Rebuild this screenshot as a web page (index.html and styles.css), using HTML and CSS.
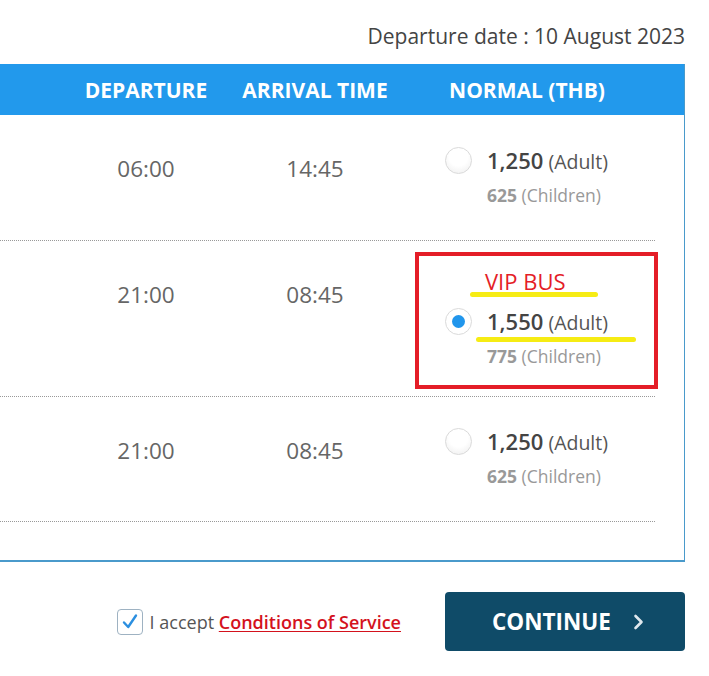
FILE: index.html
```html
<!DOCTYPE html>
<html>
<head>
<meta charset="utf-8">
<link rel="stylesheet" href="styles.css">
</head>
<body>
<div class="page">
  <div class="date">Departure date : 10 August 2023</div>
  <div class="table">
    <div class="head">
      <div></div>
      <div class="hcell">DEPARTURE</div>
      <div class="hcell">ARRIVAL TIME</div>
      <div class="hcell">NORMAL (THB)</div>
      <div></div>
    </div>
    <div class="body">
      <div class="row r1">
        <div></div>
        <div class="time">06:00</div>
        <div class="time">14:45</div>
        <div class="price">
          <span class="radio"></span>
          <div class="amounts">
            <div class="adult"><b>1,250</b> (Adult)</div>
            <div class="child"><b>625</b> (Children)</div>
          </div>
        </div>
      </div>
      <div class="row r2">
        <div></div>
        <div class="time">21:00</div>
        <div class="time">08:45</div>
        <div class="price vip">
          <div class="vipbox">
            <div class="viptitle">VIP BUS</div>
            <div class="vipline"></div>
            <div class="vipprice">
              <span class="radio checked"></span>
              <div class="amounts">
                <div class="adult"><b>1,550</b> (Adult)</div>
                <div class="child"><b>775</b> (Children)</div>
              </div>
              <div class="vipline2"></div>
            </div>
          </div>
        </div>
      </div>
      <div class="row r3">
        <div></div>
        <div class="time">21:00</div>
        <div class="time">08:45</div>
        <div class="price">
          <span class="radio"></span>
          <div class="amounts">
            <div class="adult"><b>1,250</b> (Adult)</div>
            <div class="child"><b>625</b> (Children)</div>
          </div>
        </div>
      </div>
    </div>
  </div>
  <div class="footer">
    <label class="accept">
      <span class="checkbox">
        <svg width="18" height="18" viewBox="0 0 18 18"><path d="M3 9.5 L7.2 14 L15 2.5" fill="none" stroke="#2b8fe0" stroke-width="2.4" stroke-linecap="round" stroke-linejoin="round"/></svg>
      </span>
      <span class="acctext">I accept <a class="cond">Conditions of Service</a></span>
    </label>
    <button class="continue">CONTINUE
      <svg class="chev" width="11" height="16" viewBox="0 0 11 16"><path d="M2.5 2 L8.5 8 L2.5 14" fill="none" stroke="#dfe8ee" stroke-width="2.6" stroke-linecap="round" stroke-linejoin="round"/></svg>
    </button>
  </div>
</div>
</body>
</html>
```

FILE: styles.css
```css
html, body {
  margin: 0;
  padding: 0;
  background: #fff;
}
body {
  font-family: "Open Sans", "Noto Sans", sans-serif;
  color: #444;
}
.page {
  width: 709px;
}
.date {
  height: 64px;
  box-sizing: border-box;
  padding: 21px 24px 0 0;
  text-align: right;
  font-size: 21px;
  color: #444;
  line-height: 30px;
}
.table {
  width: 685px;
  box-sizing: border-box;
  border-right: 1px solid #4a9acb;
  border-bottom: 2px solid #4a9acb;
  height: 498px;
}
.head {
  height: 51px;
  background: #2299ec;
  display: grid;
  grid-template-columns: 66px 160px 178px 246px 1fr;
  align-items: center;
}
.hcell {
  color: #fff;
  font-weight: 700;
  font-size: 21px;
  text-align: center;
}
.body {
  width: 655px;
}
.row {
  display: grid;
  grid-template-columns: 66px 160px 178px 251px;
  border-bottom: 1px dotted #999;
  box-sizing: border-box;
  align-items: start;
}
.r1 { height: 126px; }
.r2 { height: 156px; }
.r3 { height: 125px; }
.time {
  text-align: center;
  font-size: 22.5px;
  line-height: 30px;
  color: #666;
  padding-top: 39px;
}
.price {
  display: flex;
  align-items: flex-start;
  padding-left: 41px;
  padding-top: 32px;
}
.r3 .price { padding-top: 31px; }
.radio {
  width: 27px;
  height: 27px;
  border-radius: 50%;
  border: 1px solid #dadada;
  background: radial-gradient(circle at 50% 35%, #fff 45%, #ececec 100%);
  box-sizing: border-box;
  flex: none;
  position: relative;
}
.radio.checked {
  background: #fff;
}
.radio.checked::after {
  content: "";
  position: absolute;
  left: 6px;
  top: 6px;
  width: 13px;
  height: 13px;
  border-radius: 50%;
  background: #2196ec;
}
.amounts {
  margin-left: 15px;
}
.adult {
  font-size: 19.5px;
  color: #555;
  line-height: 26px;
  white-space: nowrap;
}
.adult b {
  font-size: 22px;
  font-weight: 600;
  color: #444;
}
.child {
  font-size: 17.5px;
  color: #999;
  line-height: 22px;
  margin-top: 9px;
  white-space: nowrap;
}
.child b {
  font-weight: 700;
}
.price.vip {
  padding-left: 11px;
  padding-top: 11px;
}
.vipbox {
  flex: none;
  width: 243px;
  height: 137px;
  box-sizing: border-box;
  border: 4px solid #e41d27;
  padding: 12px 0 0 26px;
}
.viptitle {
  color: #e41d27;
  font-size: 22px;
  line-height: 26px;
  padding-left: 40px;
}
.vipline {
  width: 128px;
  height: 5px;
  background: #f6ec14;
  border-radius: 3px;
  margin-left: 25px;
  margin-top: -2px;
}
.vipprice {
  display: flex;
  align-items: flex-start;
  margin-top: 11px;
  position: relative;
}
.vipline2 {
  position: absolute;
  left: 31px;
  top: 29px;
  width: 160px;
  height: 5px;
  background: #f6ec14;
  border-radius: 3px;
}
.footer {
  display: flex;
  align-items: center;
  justify-content: flex-end;
  padding: 30px 24px 0 0;
}
.accept {
  display: flex;
  align-items: center;
  margin-right: 44px;
}
.checkbox {
  width: 26px;
  height: 26px;
  box-sizing: border-box;
  border: 1px solid #9eb2c2;
  border-radius: 4px;
  display: flex;
  align-items: center;
  justify-content: center;
  margin-right: 7px;
}
.acctext {
  font-size: 18px;
  color: #555;
}
.cond {
  color: #d4121d;
  font-weight: 600;
  text-decoration: underline;
  text-underline-offset: 2px;
}
.continue {
  width: 240px;
  height: 59px;
  border: none;
  border-radius: 4px;
  background: #0f4b68;
  color: #fff;
  font-family: "Open Sans", "Noto Sans", sans-serif;
  font-weight: 700;
  font-size: 22.5px;
  display: flex;
  align-items: center;
  justify-content: flex-start;
  padding: 0 0 0 47px;
  box-sizing: border-box;
}
.chev {
  margin-left: 22px;
}
```
